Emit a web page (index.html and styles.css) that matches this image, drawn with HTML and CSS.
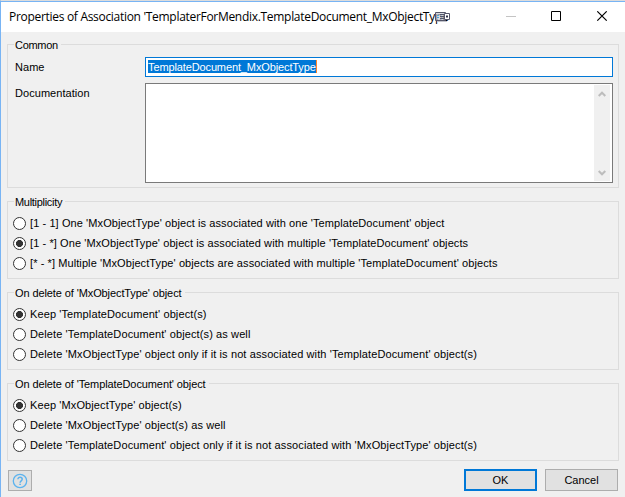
FILE: index.html
```html
<!DOCTYPE html>
<html lang="en">
<head>
<meta charset="utf-8">
<title>Properties of Association</title>
<link rel="stylesheet" href="styles.css">
</head>
<body>
<main class="dialog">
  <header class="titlebar">
    <h1 class="title">Properties of Association 'TemplaterForMendix.TemplateDocument_MxObjectType</h1>
    <svg class="badge" width="16" height="10" viewBox="0 0 16 10"><path d="M2 9.500h10" stroke="#c3c5cc"/><path d="M.5.500h10v8h-10z" fill="#c9ccd4" fill-opacity=".7" stroke="#55576a"/><path d="M2 3.500h2M2 5.500h2" stroke="#4aa3d8"/><path d="M5 2.500h4M5 4.500h4M5 6.500h4" stroke="#51566a"/><path d="M9.500 1.500h5v6h-5z" fill="#fff" stroke="#55576a"/><path d="M11 4.500h2" stroke="#33354a" stroke-width="2"/></svg>
    <svg class="controls" width="102" height="10" viewBox="0 0 102 10"><path d="M0 5.500h10" stroke="#c4c4c4"/><path d="M45.500.500h9v9h-9z" fill="none" stroke="#000"/><path d="M91.300.300l9.400 9.400M100.700.300l-9.400 9.400" stroke="#000" stroke-width="1.100"/></svg>
  </header>
  <section class="group common">
    <h2 class="legend narrow">Common</h2>
    <div class="field"><span class="label">Name</span><div class="input"><span class="selection">TemplateDocument_MxObjectType</span></div></div>
    <div class="field docs"><span class="label">Documentation</span><div class="textarea"><div class="scroll">
      <svg width="8" height="6" viewBox="0 0 8 6"><path d="M.7 5L4 1.700 7.300 5" fill="none" stroke="#bdbdbd" stroke-width="2"/></svg>
      <svg width="8" height="6" viewBox="0 0 8 6"><path d="M.7 1L4 4.300 7.300 1" fill="none" stroke="#bdbdbd" stroke-width="2"/></svg>
    </div></div></div>
  </section>
  <section class="group">
    <h2 class="legend narrow">Multiplicity</h2>
    <div class="option"><i class="radio"></i><span>[1 - 1] One 'MxObjectType' object is associated with one 'TemplateDocument' object</span></div>
    <div class="option"><i class="radio on"></i><span>[1 - *] One 'MxObjectType' object is associated with multiple 'TemplateDocument' objects</span></div>
    <div class="option"><i class="radio"></i><span>[* - *] Multiple 'MxObjectType' objects are associated with multiple 'TemplateDocument' objects</span></div>
  </section>
  <section class="group delete">
    <h2 class="legend">On delete of 'MxObjectType' object</h2>
    <div class="option"><i class="radio on"></i><span>Keep 'TemplateDocument' object(s)</span></div>
    <div class="option"><i class="radio"></i><span>Delete 'TemplateDocument' object(s) as well</span></div>
    <div class="option"><i class="radio"></i><span>Delete 'MxObjectType' object only if it is not associated with 'TemplateDocument' object(s)</span></div>
  </section>
  <section class="group delete">
    <h2 class="legend">On delete of 'TemplateDocument' object</h2>
    <div class="option"><i class="radio on"></i><span>Keep 'MxObjectType' object(s)</span></div>
    <div class="option"><i class="radio"></i><span>Delete 'MxObjectType' object(s) as well</span></div>
    <div class="option"><i class="radio"></i><span>Delete 'TemplateDocument' object only if it is not associated with 'MxObjectType' object(s)</span></div>
  </section>
  <footer class="footer">
    <div class="help"><svg width="16" height="16" viewBox="0 0 16 16" fill="none" stroke="#5cb3ee"><circle cx="8" cy="8" r="6.700" stroke-width="1.300"/><path d="M5.900 6.300c0-2.800 4.300-2.700 4.300 0 0 1.600-2.100 1.600-2.100 3.400" stroke-width="1.500"/><path d="M8.100 10.700v1.400" stroke-width="1.600"/></svg></div>
    <div class="button primary">OK</div>
    <div class="button">Cancel</div>
  </footer>
</main>
</body>
</html>
```
FILE: styles.css
```css
* { box-sizing: border-box; }
body { margin: 0; font: 11px/14px "Liberation Sans", Arial, sans-serif; color: #000; overflow: hidden; }
h1, h2 { margin: 0; font-weight: 400; font-size: inherit; }
svg { display: block; }
.dialog { width: 625px; height: 497px; background: #f0f0f0; border-left: 1px solid #78b4f4; border-top: 1px solid #dcdcdc; }
.titlebar { height: 31px; background: #fff; border-top: 1px solid #78b4f4; display: flex; align-items: flex-start; padding-left: 8px; position: relative; }
.title { font: 12px/16px "Open Sans", "Noto Sans", sans-serif; letter-spacing: -0.3px; margin-top: 7px; white-space: nowrap; }
.badge { position: absolute; left: 434px; top: 10px; }
.controls { position: absolute; left: 505px; top: 9px; }
.group { margin: 0 0 13px 6px; width: 612px; height: 78px; border: 1px solid #dcdcdc; padding: 11px 0 0 5px; position: relative; }
.common { height: 144px; margin-top: 12px; padding: 12px 0 0 7px; }
.legend { position: absolute; left: 6px; top: -7px; padding: 0 3px 0 1px; background: #f0f0f0; white-space: nowrap; letter-spacing: -0.1px; }
.narrow { letter-spacing: -0.3px; }
.field { display: flex; height: 20px; margin-bottom: 6px; }
.label { width: 130px; padding-top: 3px; letter-spacing: 0.05px; }
.input { width: 468px; height: 20px; border: 1px solid #0078d7; background: #fff; padding: 2px; }
.selection { display: inline-block; height: 13px; line-height: 14px; background: #0078d7; color: #fff; border-right: 1px solid #ff8728; vertical-align: top; letter-spacing: -0.12px; }
.textarea { width: 468px; height: 100px; border: 1px solid #7a7a7a; background: #fff; padding: 1px; display: flex; justify-content: flex-end; }
.scroll { width: 16px; height: 96px; margin-right: 1px; background: #f0f0f0; display: flex; flex-direction: column; align-items: center; justify-content: space-between; padding: 6px 0 5px; }
.option { height: 20px; display: flex; align-items: center; gap: 4px; white-space: nowrap; letter-spacing: 0.09px; }
.delete .option { letter-spacing: 0.11px; }
.radio { width: 13px; height: 13px; border: 1px solid #333; border-radius: 50%; background: #fff; }
.radio.on { background: radial-gradient(circle, #333 3.200px, #fff 3.800px); }
.footer { display: flex; margin: -5px 0 0 7px; align-items: flex-start; gap: 8px; }
.help { width: 24px; height: 21px; margin: 1px auto 0 0; background: #e1e1e1; border: 1px solid #adadad; display: flex; align-items: center; justify-content: center; }
.button { width: 73px; height: 22px; border: 1px solid #adadad; background: #e1e1e1; display: flex; align-items: center; justify-content: center; }
.primary { border: 2px solid #0078d7; }
.button:last-child { margin-right: 7px; }
```
